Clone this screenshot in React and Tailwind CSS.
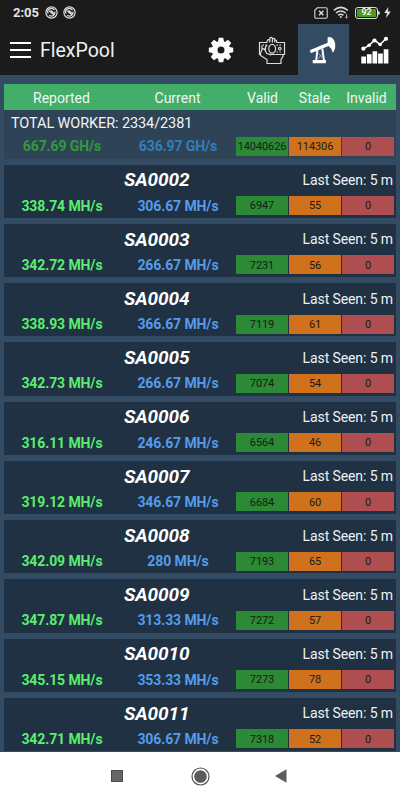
import React from "react";

const workers = [
  { name: "SA0002", reported: "338.74 MH/s", current: "306.67 MH/s", valid: 6947, stale: 55 },
  { name: "SA0003", reported: "342.72 MH/s", current: "266.67 MH/s", valid: 7231, stale: 56 },
  { name: "SA0004", reported: "338.93 MH/s", current: "366.67 MH/s", valid: 7119, stale: 61 },
  { name: "SA0005", reported: "342.73 MH/s", current: "266.67 MH/s", valid: 7074, stale: 54 },
  { name: "SA0006", reported: "316.11 MH/s", current: "246.67 MH/s", valid: 6564, stale: 46 },
  { name: "SA0007", reported: "319.12 MH/s", current: "346.67 MH/s", valid: 6684, stale: 60 },
  { name: "SA0008", reported: "342.09 MH/s", current: "280 MH/s", valid: 7193, stale: 65 },
  { name: "SA0009", reported: "347.87 MH/s", current: "313.33 MH/s", valid: 7272, stale: 57 },
  { name: "SA0010", reported: "345.15 MH/s", current: "353.33 MH/s", valid: 7273, stale: 78 },
  { name: "SA0011", reported: "342.71 MH/s", current: "306.67 MH/s", valid: 7318, stale: 52 },
];

const SwirlIcon = () => (
  <svg width="13" height="13" viewBox="0 0 13 13" fill="none" stroke="#dedede">
    <circle cx="6.5" cy="6.5" r="5.6" strokeWidth="1.2" />
    <path d="M3.2 7.6a3.5 3.5 0 0 1 6.2-3.3M9.8 5.6a3.5 3.5 0 0 1-5.6 3.6" strokeWidth="1.2" />
    <path d="M4.4 4.8l4.8 4M5.6 4.6l3 2.4" strokeWidth="1.5" />
  </svg>
);

const GearIcon = () => (
  <svg width="26" height="26" viewBox="-13 -13 26 26" fill="#fff">
    {[0, 45, 90, 135, 180, 225, 270, 315].map((angle) => (
      <path key={angle} d="M-3.2 -7.5L-2.2 -12.2h4.4L3.2 -7.5z" transform={`rotate(${angle})`} />
    ))}
    <circle r="6.3" fill="none" stroke="#fff" strokeWidth="5.6" />
  </svg>
);

const CashIcon = () => (
  <svg width="28" height="28" viewBox="0 0 28 28" fill="none" stroke="#dcdcdc" strokeWidth="1.2">
    <path d="M9 6.5H1.5V18.5H3M18.5 6.5h8v12H13" />
    <path d="M9.2 6.5V4.5q1.300-1.700 2.600 0V2.2q1.300-1.500 2.600 0V3q1.300-1.500 2.400.2v1.300q1.200-1 1.800.5v1.500M11.800 3.500v3M14.400 3v3.500M16.800 4v2.500" />
    <path d="M4 9.5v4l-1.500 4v2l6.500 4v4h14v-4l2-3v-2M4 13.5l2-1 2.800 5 4.400 1.300" />
    <ellipse cx="14.200" cy="12.800" rx="3.400" ry="4.400" />
    <path d="M4.500 9.2h5M18.500 9.2h5.200M18.500 16h5.200" strokeDasharray="1.5 1.4" />
    <circle cx="21.800" cy="12.600" r="1.300" />
    <path d="M9.200 9.2l-1.700 2v3" />
  </svg>
);

const PumpIcon = () => (
  <svg width="28" height="28" viewBox="0 0 28 28" fill="#fff">
    <path d="M.8 14.2L18.600 6.8V1.3Q24.600 0 26.200 7.8q.5 6-2.500 9Q22.900 12.3 19.600 10L1.900 17.200z" />
    <path d="M3.700 24h13.200v3.200H3.700zM7.300 14.800l2.100-.8-1.200 10H6.300zM12.300 13l2-.8L15.900 24H14z" />
    <path d="M9 23l4.500-6M9.500 17l4.500 6" stroke="#cbd3db" strokeWidth=".6" />
  </svg>
);

const ChartIcon = () => (
  <svg width="28" height="28" viewBox="0 0 28 28" fill="#fff">
    <path d="M.3 20.500H5v7H.3zM5.900 18.300h4.700v9.200H5.900zM11.500 15.300h4.700v12.200h-4.700zM17.100 17.500h4.700v10h-4.700zM22.700 13.300h4.700v14.200h-4.700z" />
    <path d="M2.400 12.700L8.100 9.300l5.400-5 5.700 4.100 5.800-6" fill="none" stroke="#fff" strokeWidth="1.5" />
    <circle cx="2.400" cy="12.700" r="2.100" />
    <circle cx="8.100" cy="9.300" r="1.800" />
    <circle cx="13.500" cy="4.500" r="2.100" />
    <circle cx="19.200" cy="8.500" r="1.800" />
    <circle cx="25" cy="2.800" r="2.100" />
  </svg>
);

const StatusBar = () => (
  <div className="flex h-6 items-center pt-px pr-[9px] pl-[13px] text-[#e4e4e4]">
    <span className="pt-px text-[13px] font-bold">2:05</span>
    <div className="ml-1.5 flex gap-[5px]">
      <SwirlIcon />
      <SwirlIcon />
    </div>
    <div className="ml-auto flex items-center">
      <svg width="14" height="12" viewBox="0 0 14 12" fill="none" stroke="#dadada" strokeWidth="1.1">
        <path d="M3.3.8H12q1.2 0 1.2 1.2v8q0 1.2-1.2 1.2H2Q.8 11.2.8 10V3.3z" />
        <path d="M5 3.7l4.4 4.6M9.4 3.7L5 8.3" strokeWidth="1.4" />
      </svg>
      <svg className="ml-[5px]" width="17" height="13" viewBox="0 0 17 13" fill="none" stroke="#dadada" strokeWidth="1.5">
        <path d="M.8 4.4q7-6 14 0M3 7q4.800-4 9.600 0M5.200 9.3q2.600-2 5.200 0" />
        <circle cx="7.800" cy="11" r="1" fill="#dadada" stroke="none" />
        <path d="M13.500 8v4M12.300 11l1.200 1 1.200-1" strokeWidth=".8" />
      </svg>
      <div className="ml-[5px] flex h-3 w-[23px] items-center justify-center rounded-[3px] border border-[#dcdcdc] p-px">
        <div className="flex h-full w-full items-center justify-center rounded-[1px] bg-[#4b9b1d] text-[9px] leading-none font-medium text-white">92</div>
      </div>
      <div className="h-1 w-[2px] rounded-r-sm bg-[#cfcfcf]" />
      <svg className="ml-[4px]" width="7" height="11" viewBox="0 0 7 11" fill="#dedede">
        <path d="M4.3 0L.2 6h2.700l-.7 5L6.800 4.500H4z" />
      </svg>
    </div>
  </div>
);

const Toolbar = () => (
  <div className="flex h-[51px] items-center">
    <div className="ml-2.5 flex w-[21px] flex-col gap-[5px]">
      <span className="h-[2px] bg-white" />
      <span className="h-[2px] bg-white" />
      <span className="h-[2px] bg-white" />
    </div>
    <h1 className="ml-[9px] pt-[2px] text-[19.5px] text-[#f0f0f0]">FlexPool</h1>
    <div className="ml-auto flex h-full">
      <button className="flex w-[51px] items-center justify-center pr-[2px]"><GearIcon /></button>
      <button className="flex w-[51px] items-center justify-center pr-px"><CashIcon /></button>
      <button className="flex w-[51px] items-center justify-center bg-[#344c63] pr-px"><PumpIcon /></button>
      <button className="flex w-[51px] items-center justify-center pl-px"><ChartIcon /></button>
    </div>
  </div>
);

const Shares = ({ valid, stale, invalid }) => (
  <div className="flex h-[19px] gap-px text-[11px] tracking-[-0.1px] text-[#151d16]">
    <span className="flex w-[52px] items-center justify-center bg-[#2c8935] pt-[2px]">{valid}</span>
    <span className="flex w-[52px] items-center justify-center bg-[#cf711d] pt-[2px]">{stale}</span>
    <span className="flex w-[52px] items-center justify-center bg-[#ae4e50] pt-[2px]">{invalid}</span>
  </div>
);

const WorkerCard = ({ worker }) => (
  <div className="h-[53.25px] shrink-0 bg-[#1f3142]">
    <div className="flex h-[31px] items-center">
      <h2 className="w-[152px] shrink-0 pt-px pl-[120px] text-[19px] font-bold tracking-[-0.1px] whitespace-nowrap italic text-white">{worker.name}</h2>
      <span className="ml-auto pt-px pr-[3px] text-[14px] tracking-[-0.1px] text-[#eef1f4]">Last Seen: 5 m</span>
    </div>
    <div className="flex h-[20px] items-center text-[14px] font-bold tracking-[-0.1px]">
      <span className="w-[116px] pt-px text-center text-[#5ced70]">{worker.reported}</span>
      <span className="w-[116px] pt-px text-center text-[#559cec]">{worker.current}</span>
      <div className="mr-[2px] ml-auto font-normal">
        <Shares valid={worker.valid} stale={worker.stale} invalid={0} />
      </div>
    </div>
  </div>
);

const NavBar = () => (
  <div className="flex h-12 items-center bg-white">
    <div className="ml-[111px] h-3 w-3 border border-[#4c4c4c] bg-[#666]" />
    <svg className="ml-[68px]" width="19" height="19" viewBox="0 0 19 19">
      <circle cx="9.5" cy="9.5" r="8.5" fill="none" stroke="#505050" strokeWidth="1.2" />
      <circle cx="9.5" cy="9.5" r="6.3" fill="#5b5b5b" />
    </svg>
    <svg className="ml-[65px]" width="12" height="14" viewBox="0 0 12 14" fill="#5b5b5b">
      <path d="M11.5.3v13.4L0 7z" />
    </svg>
  </div>
);

const App = () => {
  return (
    <div className="flex h-[800px] w-[400px] flex-col overflow-hidden bg-[#344c63] font-['Roboto',sans-serif]">
      <header className="h-[75px] shrink-0 bg-[#1b1b1b]">
        <StatusBar />
        <Toolbar />
      </header>
      <main className="flex h-[677px] shrink-0 flex-col overflow-hidden px-1 pt-[9px]">
        {/* Column titles */}
        <div className="flex h-[26px] shrink-0 items-center bg-[#43ae69] pt-[2px] text-[14px] text-[#edf8f0]">
          <span className="w-[115px] text-center">Reported</span>
          <span className="w-[117px] text-center">Current</span>
          <span className="w-[53px] text-center">Valid</span>
          <span className="w-[51px] text-center">Stale</span>
          <span className="w-[53px] text-center">Invalid</span>
        </div>
        {/* Totals */}
        <div className="h-[48.5px] shrink-0 bg-[#2f4357]">
          <p className="flex h-[26px] items-center pt-[2px] pl-[7px] text-[14.5px] tracking-[-0.1px] text-[#f2f4f6]">TOTAL WORKER: 2334/2381</p>
          <div className="flex h-[20px] items-center text-[14px] font-bold tracking-[-0.1px]">
            <span className="w-[116px] pt-px text-center text-[#319b3c]">667.69 GH/s</span>
            <span className="w-[116px] pt-px text-center text-[#347fbb]">636.97 GH/s</span>
            <div className="mr-[2px] ml-auto font-normal">
              <Shares valid={14040626} stale={114306} invalid={0} />
            </div>
          </div>
        </div>
        {/* Workers */}
        <div className="mt-[6px] flex flex-col gap-[6px]">
          {workers.map((worker) => (
            <WorkerCard key={worker.name} worker={worker} />
          ))}
        </div>
      </main>
      <NavBar />
    </div>
  );
};

export default App;
